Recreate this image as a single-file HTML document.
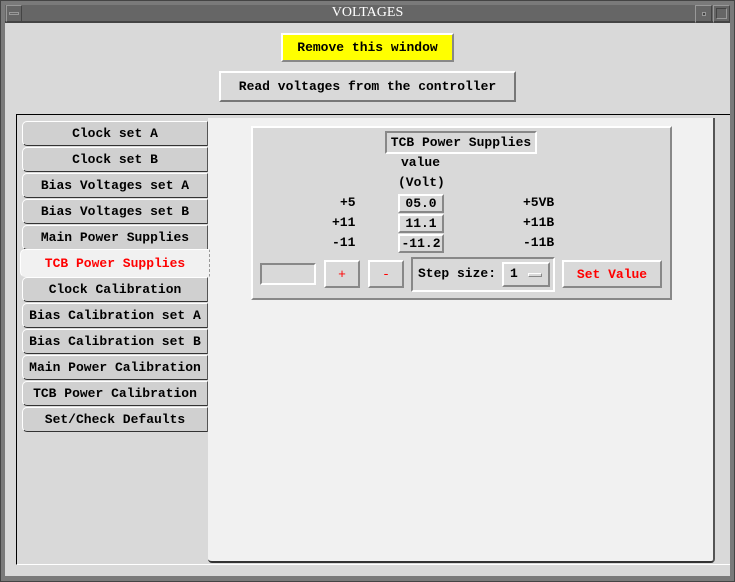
<!DOCTYPE html>
<html><head><style>
*{box-sizing:border-box;margin:0;padding:0}
body{width:735px;height:582px;background:#5c5c5c;position:relative;overflow:hidden;font-family:"Liberation Mono",monospace;font-size:13px;color:#000}
.a{position:absolute}
.raised{border:2px solid;border-color:#fff #888 #888 #fff;background:#d9d9d9}
.sunk{border:2px solid;border-color:#888 #fff #fff #888}
.btn{display:flex;align-items:center;justify-content:center;white-space:pre}
.tab{position:absolute;left:22px;width:186px;height:25px;background:#d0d0d0;border:1px solid;border-color:#fff #555 #333 #fff;border-radius:5px 0 0 5px;display:flex;align-items:center;justify-content:center;font-weight:bold;font-size:13px;white-space:pre}
.t{position:absolute;white-space:pre;font-weight:bold}
</style></head><body>
<!-- frame -->
<div class="a" style="left:0;top:0;width:735px;height:582px;background:#7a7a7a;border:1px solid #444"></div>
<div class="a" style="left:5px;top:5px;width:725px;height:18px;background:#666;border-bottom:2px solid #444"></div>
<div class="a" style="left:6px;top:5px;width:16px;height:17px;border:1px solid;border-color:#999 #444 #444 #999"></div>
<div class="a" style="left:9px;top:12px;width:10px;height:3px;border:1px solid #999"></div>
<div class="a" style="left:0;top:5px;width:735px;text-align:center;color:#fff;font-family:'Liberation Serif',serif;font-size:14px">VOLTAGES</div>
<div class="a" style="left:695px;top:5px;width:17px;height:18px;border:1px solid;border-color:#999 #444 #444 #999"></div>
<div class="a" style="left:702px;top:12px;width:4px;height:4px;background:#444;border:1px solid #999"></div>
<div class="a" style="left:713px;top:5px;width:17px;height:18px;border:1px solid;border-color:#999 #444 #444 #999"></div>
<div class="a" style="left:716px;top:8px;width:11px;height:11px;border:1px solid;border-color:#444 #999 #999 #444"></div>
<div class="a" style="left:5px;top:23px;width:725px;height:553px;background:#d9d9d9"></div>
<!-- top buttons -->
<div class="a btn raised" style="left:281px;top:33px;width:173px;height:29px;background:#ffff00;font-weight:bold">Remove this window</div>
<div class="a btn raised" style="left:219px;top:71px;width:297px;height:31px;border-color:#fff #777 #777 #fff;font-weight:bold">Read voltages from the controller</div>
<!-- notebook -->
<div class="a" style="left:16px;top:114px;width:714px;height:451px;border-left:1px solid #000;border-top:1px solid #000;border-bottom:1px solid #fff"></div>
<div class="a" style="left:208px;top:118px;width:507px;height:445px;background:#f1f1f1;border-right:2px solid #555;border-bottom:2px solid #333;border-radius:0 0 4px 4px"></div>
<div class="tab" style="top:121px">Clock set A</div>
<div class="tab" style="top:147px">Clock set B</div>
<div class="tab" style="top:173px">Bias Voltages set A</div>
<div class="tab" style="top:199px">Bias Voltages set B</div>
<div class="tab" style="top:225px">Main Power Supplies</div>
<div class="tab" style="top:249px;left:20px;width:190px;height:28px;background:#f1f1f1;color:#f00;border-color:#fff #999 #f1f1f1 #fff;border-right:1px dashed #999">TCB Power Supplies</div>
<div class="tab" style="top:277px">Clock Calibration</div>
<div class="tab" style="top:303px">Bias Calibration set A</div>
<div class="tab" style="top:329px">Bias Calibration set B</div>
<div class="tab" style="top:355px">Main Power Calibration</div>
<div class="tab" style="top:381px">TCB Power Calibration</div>
<div class="tab" style="top:407px">Set/Check Defaults</div>
<!-- inner panel -->
<div class="a" style="left:251px;top:126px;width:421px;height:174px;background:#d9d9d9;border:2px solid;border-color:#fff #888 #888 #fff"></div>
<div class="a btn" style="left:385px;top:131px;width:152px;height:23px;border:2px solid;border-color:#888 #fff #fff #888;font-weight:bold">TCB Power Supplies</div>
<div class="t" style="left:401px;top:155px">value</div>
<div class="t" style="left:398px;top:175px">(Volt)</div>
<div class="t" style="left:340px;top:195px">+5</div>
<div class="t" style="left:332px;top:215px">+11</div>
<div class="t" style="left:332px;top:235px">-11</div>
<div class="t" style="left:523px;top:195px">+5VB</div>
<div class="t" style="left:523px;top:215px">+11B</div>
<div class="t" style="left:523px;top:235px">-11B</div>
<div class="a btn raised" style="left:398px;top:194px;width:46px;height:19px;font-weight:bold">05.0</div>
<div class="a btn raised" style="left:398px;top:214px;width:46px;height:19px;font-weight:bold">11.1</div>
<div class="a btn raised" style="left:398px;top:234px;width:46px;height:19px;font-weight:bold">-11.2</div>
<div class="a" style="left:260px;top:263px;width:56px;height:22px;border:2px solid;border-color:#888 #fff #fff #888"></div>
<div class="a btn raised" style="left:324px;top:260px;width:36px;height:28px;color:#f00">+</div>
<div class="a btn raised" style="left:368px;top:260px;width:36px;height:28px;color:#f00">-</div>
<div class="a" style="left:411px;top:257px;width:144px;height:35px;border:2px solid;border-color:#888 #fff #fff #888"></div>
<div class="t" style="left:418px;top:266px;font-weight:bold">Step size:</div>
<div class="a raised" style="left:502px;top:262px;width:48px;height:25px;border-color:#fff #888 #888 #fff"></div>
<div class="t" style="left:510px;top:266px">1</div>
<div class="a" style="left:528px;top:273px;width:14px;height:4px;border:1px solid;border-color:#fff #888 #888 #fff"></div>
<div class="a btn raised" style="left:562px;top:260px;width:100px;height:28px;color:#f00;font-weight:bold">Set Value</div>
</body></html>
